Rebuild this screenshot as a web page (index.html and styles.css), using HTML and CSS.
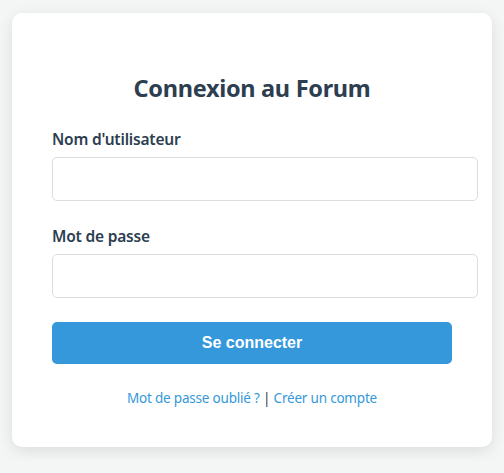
FILE: index.html
```html
<!DOCTYPE html>
<html>
    <head>
        <meta charset="utf-8" />
        <meta name="viewport" content="width=device-width, initial-scale=1" />
        <title>Connexion au Forum</title>
        <link rel="stylesheet" href="styles.css">
    </head>
    <body>
        <div class="login">
            <h2 class="login__title">Connexion au Forum</h2>
            <form class="login__form">
                <div class="field">
                    <label for="username">Nom d'utilisateur</label>
                    <input type="text" id="username" name="username">
                </div>
                <div class="field">
                    <label for="password">Mot de passe</label>
                    <input type="password" id="password" name="password">
                </div>
                <button type="submit" class="login__btn">Se connecter</button>
            </form>
            <p class="login__links">
                <a href="#">Mot de passe oublié ?</a> | <a href="#">Créer un compte</a>
            </p>
        </div>
    </body>
</html>
```

FILE: styles.css
```css
body{
    margin:0;
    padding:13px 12px;
    background:#f4f5f5;
    font-family:'Noto Sans', 'Open Sans', sans-serif;
    color:#2c3e50;
    display:flex;
    justify-content:center;
    align-items:flex-start;
}
.login{
    width:400px;
    padding:40px;
    background:#fff;
    border-radius:10px;
    box-shadow:0 4px 15px rgba(0,0,0,0.1);
}
.login__title{
    text-align:center;
    font-size:23.5px;
    letter-spacing:-0.3px;
    line-height:32px;
    margin:19px 0 24px;
}
.field{
    margin-bottom:24px;
}
.field label{
    display:block;
    font-size:15.5px;
    letter-spacing:-0.2px;
    line-height:22px;
    font-weight:600;
    margin-bottom:7px;
}
.field input{
    display:block;
    box-sizing:content-box;
    width:100%;
    height:18px;
    padding:12px;
    border:1px solid #ddd;
    border-radius:5px;
    font-size:16px;
}
.login__btn{
    display:block;
    width:100%;
    padding:12px;
    border:none;
    border-radius:5px;
    background:#3498db;
    color:#fff;
    font-family:'Liberation Sans', Arial, sans-serif;
    font-size:16px;
    font-weight:bold;
    line-height:18px;
}
.login__links{
    text-align:center;
    font-size:13.5px;
    letter-spacing:-0.2px;
    line-height:18px;
    margin:25px 0 0;
}
.login__links a{
    color:#3498db;
    text-decoration:none;
}
```
